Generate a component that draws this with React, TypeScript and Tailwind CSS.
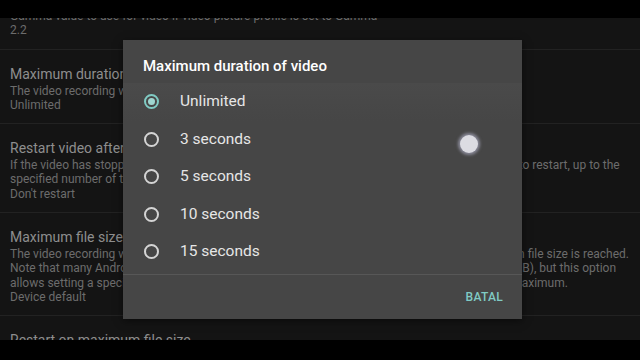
import React from "react";

type Item = { title: string; lines: string[] };

const items: Item[] = [
  {
    title: "Gamma for video",
    lines: [
      "Gamma value to use for video if video picture profile is set to Gamma",
      "2.2",
    ],
  },
  {
    title: "Maximum duration of video",
    lines: [
      "The video recording will automatically stop after the specified duration",
      "Unlimited",
    ],
  },
  {
    title: "Restart video after maximum duration",
    lines: [
      "If the video has stopped due to reaching the maximum duration, this option will cause the video to restart, up to the",
      "specified number of times",
      "Don't restart",
    ],
  },
  {
    title: "Maximum file size of video",
    lines: [
      "The video recording will then automatically stop (or restart, see the next option) when the chosen file size is reached.",
      "Note that many Android smartphones have a maximum file size limit (typically around 2GB or 4GB), but this option",
      "allows setting a specified smaller value, so that the video restarts before reaching the device's maximum.",
      "Device default",
    ],
  },
  {
    title: "Restart on maximum file size",
    lines: ["If the video has stopped due to reaching the maximum file size, restart"],
  },
];

const options = ["Unlimited", "3 seconds", "5 seconds", "10 seconds", "15 seconds"];

function Radio({ checked }: { checked: boolean }) {
  if (checked) {
    return (
      <div className="w-[15px] h-[15px] rounded-full border-2 border-[#80cbc4] flex items-center justify-center shrink-0">
        <div className="w-[7px] h-[7px] rounded-full bg-[#9fd6d0]" />
      </div>
    );
  }
  return <div className="w-[15px] h-[15px] rounded-full border-2 border-[#d4d4d4] shrink-0" />;
}

export default function App() {
  return (
    <div className="relative w-[640px] h-[360px] bg-black overflow-hidden font-['Roboto',sans-serif]">
      <div className="mt-[18px] h-[322px] bg-[#141414] overflow-hidden">
        <div className="-mt-[43px]">
          {items.map((it, i) => (
            <div key={i} className="px-[10px] pt-[14px] pb-[11px] border-b border-[#222222]">
              <div className="text-[14px] leading-[20px] text-[#8e8e8e] whitespace-nowrap">{it.title}</div>
              {it.lines.map((l, j) => (
                <div key={j} className="text-[12px] leading-[14.3px] text-[#6c6c6c] whitespace-nowrap">
                  {l}
                </div>
              ))}
            </div>
          ))}
        </div>
      </div>

      <div className="absolute left-[123px] top-[40px] w-[399px] h-[279px] bg-[#464646] flex flex-col shadow-[0_2px_8px_rgba(0,0,0,0.5)]">
        <div className="pt-[16px] px-[20px] pb-[7px] text-[15px] leading-[20px] font-medium text-white">
          Maximum duration of video
        </div>
        {options.map((o, i) => (
          <div
            key={o}
            className={
              "h-[37.5px] flex items-center pl-[21px] " +
              (i === 0 ? "bg-gradient-to-b from-[#4a4a4a] to-[#464646]" : "")
            }
          >
            <Radio checked={i === 0} />
            <span className="ml-[21px] text-[15.5px] text-[#e6e6e6]">{o}</span>
          </div>
        ))}
        <div className="mt-[3.5px] h-px bg-[#575757]" />
        <div className="flex-1 flex items-center justify-end pr-[19px]">
          <span className="text-[12px] font-medium tracking-[0.3px] text-[#80cbc4]">BATAL</span>
        </div>
      </div>

      <div className="absolute left-[460px] top-[135px] w-[18px] h-[18px] rounded-full bg-[#dcdce2] shadow-[0_0_3px_2px_rgba(190,190,215,0.55)]" />
    </div>
  );
}
